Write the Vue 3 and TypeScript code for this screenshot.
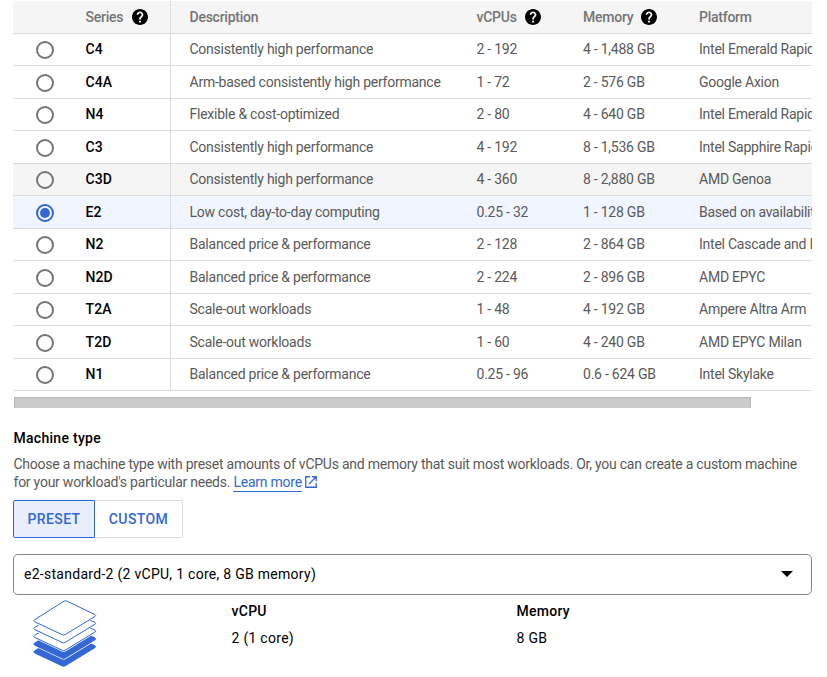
<script setup lang="ts">
import { ref } from 'vue'

interface Series {
  name: string
  description: string
  vcpus: string
  memory: string
  platform: string
}

interface Column {
  label: string
  help: boolean
}

const columns: Column[] = [
  { label: 'Series', help: true },
  { label: 'Description', help: false },
  { label: 'vCPUs', help: true },
  { label: 'Memory', help: true },
  { label: 'Platform', help: false },
]

const series: Series[] = [
  { name: 'C4', description: 'Consistently high performance', vcpus: '2 - 192', memory: '4 - 1,488 GB', platform: 'Intel Emerald Rapids' },
  { name: 'C4A', description: 'Arm-based consistently high performance', vcpus: '1 - 72', memory: '2 - 576 GB', platform: 'Google Axion' },
  { name: 'N4', description: 'Flexible & cost-optimized', vcpus: '2 - 80', memory: '4 - 640 GB', platform: 'Intel Emerald Rapids' },
  { name: 'C3', description: 'Consistently high performance', vcpus: '4 - 192', memory: '8 - 1,536 GB', platform: 'Intel Sapphire Rapids' },
  { name: 'C3D', description: 'Consistently high performance', vcpus: '4 - 360', memory: '8 - 2,880 GB', platform: 'AMD Genoa' },
  { name: 'E2', description: 'Low cost, day-to-day computing', vcpus: '0.25 - 32', memory: '1 - 128 GB', platform: 'Based on availability' },
  { name: 'N2', description: 'Balanced price & performance', vcpus: '2 - 128', memory: '2 - 864 GB', platform: 'Intel Cascade and Ice Lake' },
  { name: 'N2D', description: 'Balanced price & performance', vcpus: '2 - 224', memory: '2 - 896 GB', platform: 'AMD EPYC' },
  { name: 'T2A', description: 'Scale-out workloads', vcpus: '1 - 48', memory: '4 - 192 GB', platform: 'Ampere Altra Arm' },
  { name: 'T2D', description: 'Scale-out workloads', vcpus: '1 - 60', memory: '4 - 240 GB', platform: 'AMD EPYC Milan' },
  { name: 'N1', description: 'Balanced price & performance', vcpus: '0.25 - 96', memory: '0.6 - 624 GB', platform: 'Intel Skylake' },
]

const selected = ref('E2')
const highlighted = ref('C3D')
const mode = ref<'PRESET' | 'CUSTOM'>('PRESET')

// Stack of sheets, painted from the lowest one up
const sheet = 'M1.500 19.800L31 1.200Q32.600 .300 34.200 1.200L62 14.600Q63.400 15.500 62 16.400L32.200 34.600Q30.600 35.500 29 34.600L1.500 21.700Q.200 20.700 1.500 19.800z'
const layers = [
  { offset: 31.2, solid: true },
  { offset: 23.4, solid: true },
  { offset: 15.6, solid: false },
  { offset: 7.8, solid: false },
  { offset: 0, solid: false },
]
</script>

<template>
  <main class="page">
    <div class="table">
      <div class="row head">
        <span class="pick"></span>
        <span v-for="(col, i) in columns" :key="col.label" class="cell" :class="{ name: i === 0 }">
          {{ col.label }}
          <svg v-if="col.help" class="help" viewBox="2 2 20 20">
            <path
              d="M12 2C6.48 2 2 6.48 2 12s4.48 10 10 10 10-4.48 10-10S17.52 2 12 2zm1.2 17h-2.4v-2.3h2.4V19zm2.2-7.7l-.9.92c-.72.73-1.3 1.4-1.3 2.98h-2.3v-.6c0-1.1.5-2.1 1.2-2.8l1.3-1.3c.4-.35.6-.85.6-1.4 0-1.1-.9-1.9-2-1.9s-2 .8-2 1.9H7.8C7.8 6.7 9.7 5 12 5s4.200 1.800 4.200 4.100c0 .88-.36 1.680-.8 2.200z"
            />
          </svg>
        </span>
      </div>
      <div
        v-for="s in series"
        :key="s.name"
        class="row item"
        :class="{ selected: s.name === selected, hovered: s.name === highlighted }"
        @click="selected = s.name"
      >
        <span class="pick"><span class="radio"></span></span>
        <span class="cell name">{{ s.name }}</span>
        <span class="cell">{{ s.description }}</span>
        <span class="cell">{{ s.vcpus }}</span>
        <span class="cell">{{ s.memory }}</span>
        <span class="cell">{{ s.platform }}</span>
      </div>
    </div>
    <div class="scrollbar"></div>

    <h2 class="title">Machine type</h2>
    <p class="intro">
      Choose a machine type with preset amounts of vCPUs and memory that suit most workloads. Or, you can create a custom machine<br />
      for your workload's particular needs.
      <a class="link">Learn more</a>
      <svg class="external" viewBox="0 0 12 12">
        <path d="M5 .75H.75v10.500h10.500V7M7 .75h4.250V5M11 1L4 8" />
      </svg>
    </p>

    <div class="toggle">
      <button class="option" :class="{ active: mode === 'PRESET' }" @click="mode = 'PRESET'">PRESET</button>
      <button class="option" :class="{ active: mode === 'CUSTOM' }" @click="mode = 'CUSTOM'">CUSTOM</button>
    </div>

    <div class="select">
      <span>e2-standard-2 (2 vCPU, 1 core, 8 GB memory)</span>
      <svg class="arrow" viewBox="0 0 12 6"><path d="M0 0h12L6 6z" /></svg>
    </div>

    <div class="summary">
      <svg class="layers" viewBox="0 0 64 68">
        <g v-for="l in layers" :key="l.offset" :transform="`translate(0 ${l.offset})`">
          <path class="halo" :d="sheet" />
          <path class="sheet" :class="{ solid: l.solid }" :d="sheet" />
        </g>
      </svg>
      <div class="fact">
        <strong>vCPU</strong>
        <span>2 (1 core)</span>
      </div>
      <div class="fact">
        <strong>Memory</strong>
        <span>8 GB</span>
      </div>
    </div>
  </main>
</template>

<style>
body {
  background: #fff;
}
</style>

<style scoped>
.page {
  box-sizing: border-box;
  width: 827px;
  height: 677px;
  padding: 1px 15px 0 13px;
  overflow: hidden;
  font-family: Roboto, sans-serif;
  font-size: 14px;
  letter-spacing: 0.28px;
  color: #000;
}
.table {
  overflow: hidden;
}
.row {
  display: grid;
  grid-template-columns: 72.500px 84.500px 306.500px 106.500px 116px 1fr;
  box-sizing: border-box;
  height: 32px;
  border-bottom: 1px solid #dadce0;
  white-space: nowrap;
  letter-spacing: -0.24px;
  color: #5a5a5a;
}
.row:nth-child(odd) {
  height: 33px;
}
.row.head {
  height: 33px;
}
.cell {
  padding-top: 5px;
  line-height: 20px;
  min-width: 0;
}
.cell:nth-child(3) {
  padding-left: 18.500px;
  border-left: 1px solid #dadce0;
}
.item:nth-child(odd) .cell {
  padding-top: 6px;
}
.item .name {
  font-weight: 500;
  letter-spacing: 0.1px;
  color: #000;
}
.row.head {
  background: #f5f5f5;
  font-weight: 500;
  letter-spacing: -0.25px;
  color: #757575;
}
.head .cell {
  display: flex;
  align-items: center;
  padding-top: 0;
}
.help {
  width: 16px;
  height: 16px;
  margin-left: 8px;
  fill: #000;
}
.name .help {
  margin-left: 9px;
}
.hovered {
  background: #f5f5f5;
}
.selected {
  background: #f0f5ff;
}
.pick {
  padding: 7px 0 0 23px;
}
.item:nth-child(odd) .pick {
  padding-top: 8px;
}
.radio {
  display: flex;
  align-items: center;
  justify-content: center;
  box-sizing: border-box;
  width: 18px;
  height: 18px;
  border: 2px solid #757575;
  border-radius: 50%;
}
.selected .radio {
  border-color: #3367d6;
}
.selected .radio::after {
  content: '';
  width: 10px;
  height: 10px;
  border-radius: 50%;
  background: #3367d6;
}
.scrollbar {
  box-sizing: border-box;
  width: 737px;
  height: 11px;
  margin: 6px 0 0 1px;
  border: 1px solid #b7b7b7;
  border-bottom: 0;
  background: #cbcbcb;
}
.title {
  margin: 20px 0 0 0.500px;
  font-size: 14px;
  line-height: 20px;
  font-weight: 500;
}
.intro {
  margin: 7px 0 0 0.500px;
  line-height: 18px;
  white-space: nowrap;
  letter-spacing: -0.24px;
  color: #5a5a5a;
}
.link {
  padding-bottom: 1px;
  border-bottom: 1px solid #3367d6;
  color: #3367d6;
}
.external {
  width: 12px;
  height: 12px;
  margin-left: 0.500px;
  vertical-align: -1px;
  fill: none;
  stroke: #3367d6;
  stroke-width: 1.300;
}
.link + .external {
  margin-left: 3px;
}
.toggle {
  display: flex;
  margin-top: 9px;
}
.option {
  box-sizing: border-box;
  width: 88px;
  height: 38px;
  padding: 0;
  border: 1px solid #dadce0;
  border-left: 0;
  border-radius: 0 2px 2px 0;
  background: #fff;
  font: 500 14px/20px Roboto, sans-serif;
  letter-spacing: 0.4px;
  color: #3367d6;
}
.option:first-child {
  width: 82px;
  border-left: 1px solid #dadce0;
  border-radius: 2px 0 0 2px;
}
.option.active {
  border-color: #3367d6;
  background: #e8eefb;
}
.select {
  display: flex;
  align-items: center;
  justify-content: space-between;
  box-sizing: border-box;
  height: 41px;
  margin-top: 16px;
  padding: 0 18px 1px 10px;
  border: 1px solid #80868b;
  border-radius: 5px;
}
.arrow {
  width: 12px;
  height: 6px;
}
.summary {
  display: grid;
  grid-template-columns: 218.500px 285px 1fr;
}
.layers {
  width: 64px;
  height: 68px;
  margin: 5px 0 0 20px;
}
.halo {
  fill: #fff;
  stroke: #fff;
  stroke-width: 2.200;
}
.sheet {
  fill: #fff;
  stroke: #3367d6;
  stroke-width: 1;
  stroke-linejoin: round;
}
.sheet.solid {
  fill: #3367d6;
}
.fact {
  display: flex;
  flex-direction: column;
  gap: 7px;
  padding-top: 6px;
  line-height: 20px;
}
.fact strong {
  font-weight: 500;
}
</style>
